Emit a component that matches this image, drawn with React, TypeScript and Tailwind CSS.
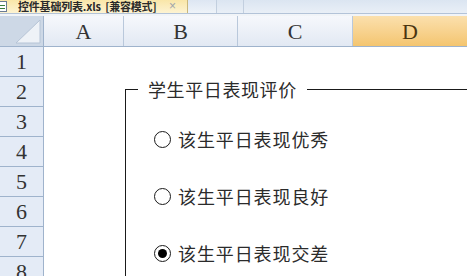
import React from 'react';

const cols = [
  { key: 'A', w: 'w-[80px]' },
  { key: 'B', w: 'w-[114px]' },
  { key: 'C', w: 'w-[115px]' },
];

const options = [
  { label: '该生平日表现优秀', checked: false },
  { label: '该生平日表现良好', checked: false },
  { label: '该生平日表现交差', checked: true },
];

const Radio = ({ checked }: { checked: boolean }) => (
  <span className="w-[17px] h-[17px] rounded-full border-[1.5px] border-[#1a1a1a] bg-white flex items-center justify-center shrink-0">
    {checked && <span className="w-[9px] h-[9px] rounded-full bg-black" />}
  </span>
);

export default function App() {
  return (
    <div className="relative w-[467px] h-[276px] overflow-hidden bg-white font-['Liberation_Serif',serif]">
      {/* workbook tab strip */}
      <div className="h-[14px] flex bg-gradient-to-b from-[#dbe5f1] to-[#e9eff7] border-b border-[#b3c3d8]">
        <div className="w-[188px] flex items-end pb-[1px] bg-gradient-to-b from-[#f9e6a8] to-[#fdf3d2] border-r border-[#c9b77c]">
          <svg width="10" height="12" viewBox="0 0 10 12" className="ml-[-2px] mr-[10px]">
            <rect x="0.5" y="1.5" width="8" height="10" fill="#fff" stroke="#6b7c93" />
            <rect x="2" y="5" width="5" height="1" fill="#3a7d3a" />
            <rect x="2" y="8" width="5" height="1" fill="#3a7d3a" />
          </svg>
          <span className="text-[11px] leading-[12px] font-bold text-[#2a2a2a] font-['Noto_Sans_CJK_SC','Liberation_Sans',sans-serif] tracking-[-0.2px]">
            控件基础列表.xls&nbsp; [兼容模式]
          </span>
          <span className="ml-auto mr-[11px] text-[12px] leading-[12px] text-[#a0a4aa] font-['Liberation_Sans',sans-serif]">×</span>
        </div>
        <div className="w-[29px] border-r border-[#c2cfdf] bg-gradient-to-b from-[#dde6f2] to-[#eef3f9]" />
        <div className="w-[27px] border-r border-[#c2cfdf]" />
      </div>
      <div className="h-[2px] bg-[#f1f4f8]" />

      {/* column headers */}
      <div className="h-[31px] flex border-b border-[#9fb3cc]">
        <div className="w-[44px] h-full border-r border-[#9fb3cc] bg-[#cdd8e6]">
          <svg width="43" height="30" viewBox="0 0 43 30">
            <polygon points="40,4 40,27 16,27" fill="#eef2f7" stroke="#b6c4d6" />
          </svg>
        </div>
        {cols.map((c) => (
          <div
            key={c.key}
            className={`${c.w} h-full flex items-center justify-center border-r border-[#b9c8db] bg-gradient-to-b from-[#f6f8fc] to-[#e2e9f3] text-[22px] text-[#333]`}
          >
            {c.key}
          </div>
        ))}
        <div className="flex-1 h-full flex items-center justify-center bg-gradient-to-b from-[#fbe0ad] to-[#f4c56f] text-[22px] text-[#4a3510]">
          D
        </div>
      </div>

      {/* rows */}
      <div className="flex flex-col">
        {[1, 2, 3, 4, 5, 6, 7, 8].map((n) => (
          <div key={n} className="h-[30px] flex shrink-0">
            <div className="w-[44px] flex items-center justify-center border-r border-b border-[#9fb3cc] bg-[#e4ebf6] text-[22px] text-[#333]">
              {n}
            </div>
            <div className="flex-1 bg-white" />
          </div>
        ))}
      </div>

      {/* option group box */}
      <div className="absolute left-[125px] top-[89px] w-[400px] h-[220px] border-t border-l border-[#1a1a1a] font-['Noto_Sans_CJK_SC',sans-serif] text-[#2b2b2b]">
        <span className="absolute left-[12px] top-[-12px] px-[10px] bg-white text-[18px] leading-[22px] tracking-[0.6px]">
          学生平日表现评价
        </span>
        <div className="flex flex-col gap-[35px] pt-[38px] pl-[28px]">
          {options.map((o) => (
            <div key={o.label} className="h-[22px] flex items-center gap-[7px]">
              <Radio checked={o.checked} />
              <span className="text-[18px] leading-[22px] tracking-[0.9px]">{o.label}</span>
            </div>
          ))}
        </div>
      </div>
    </div>
  );
}
